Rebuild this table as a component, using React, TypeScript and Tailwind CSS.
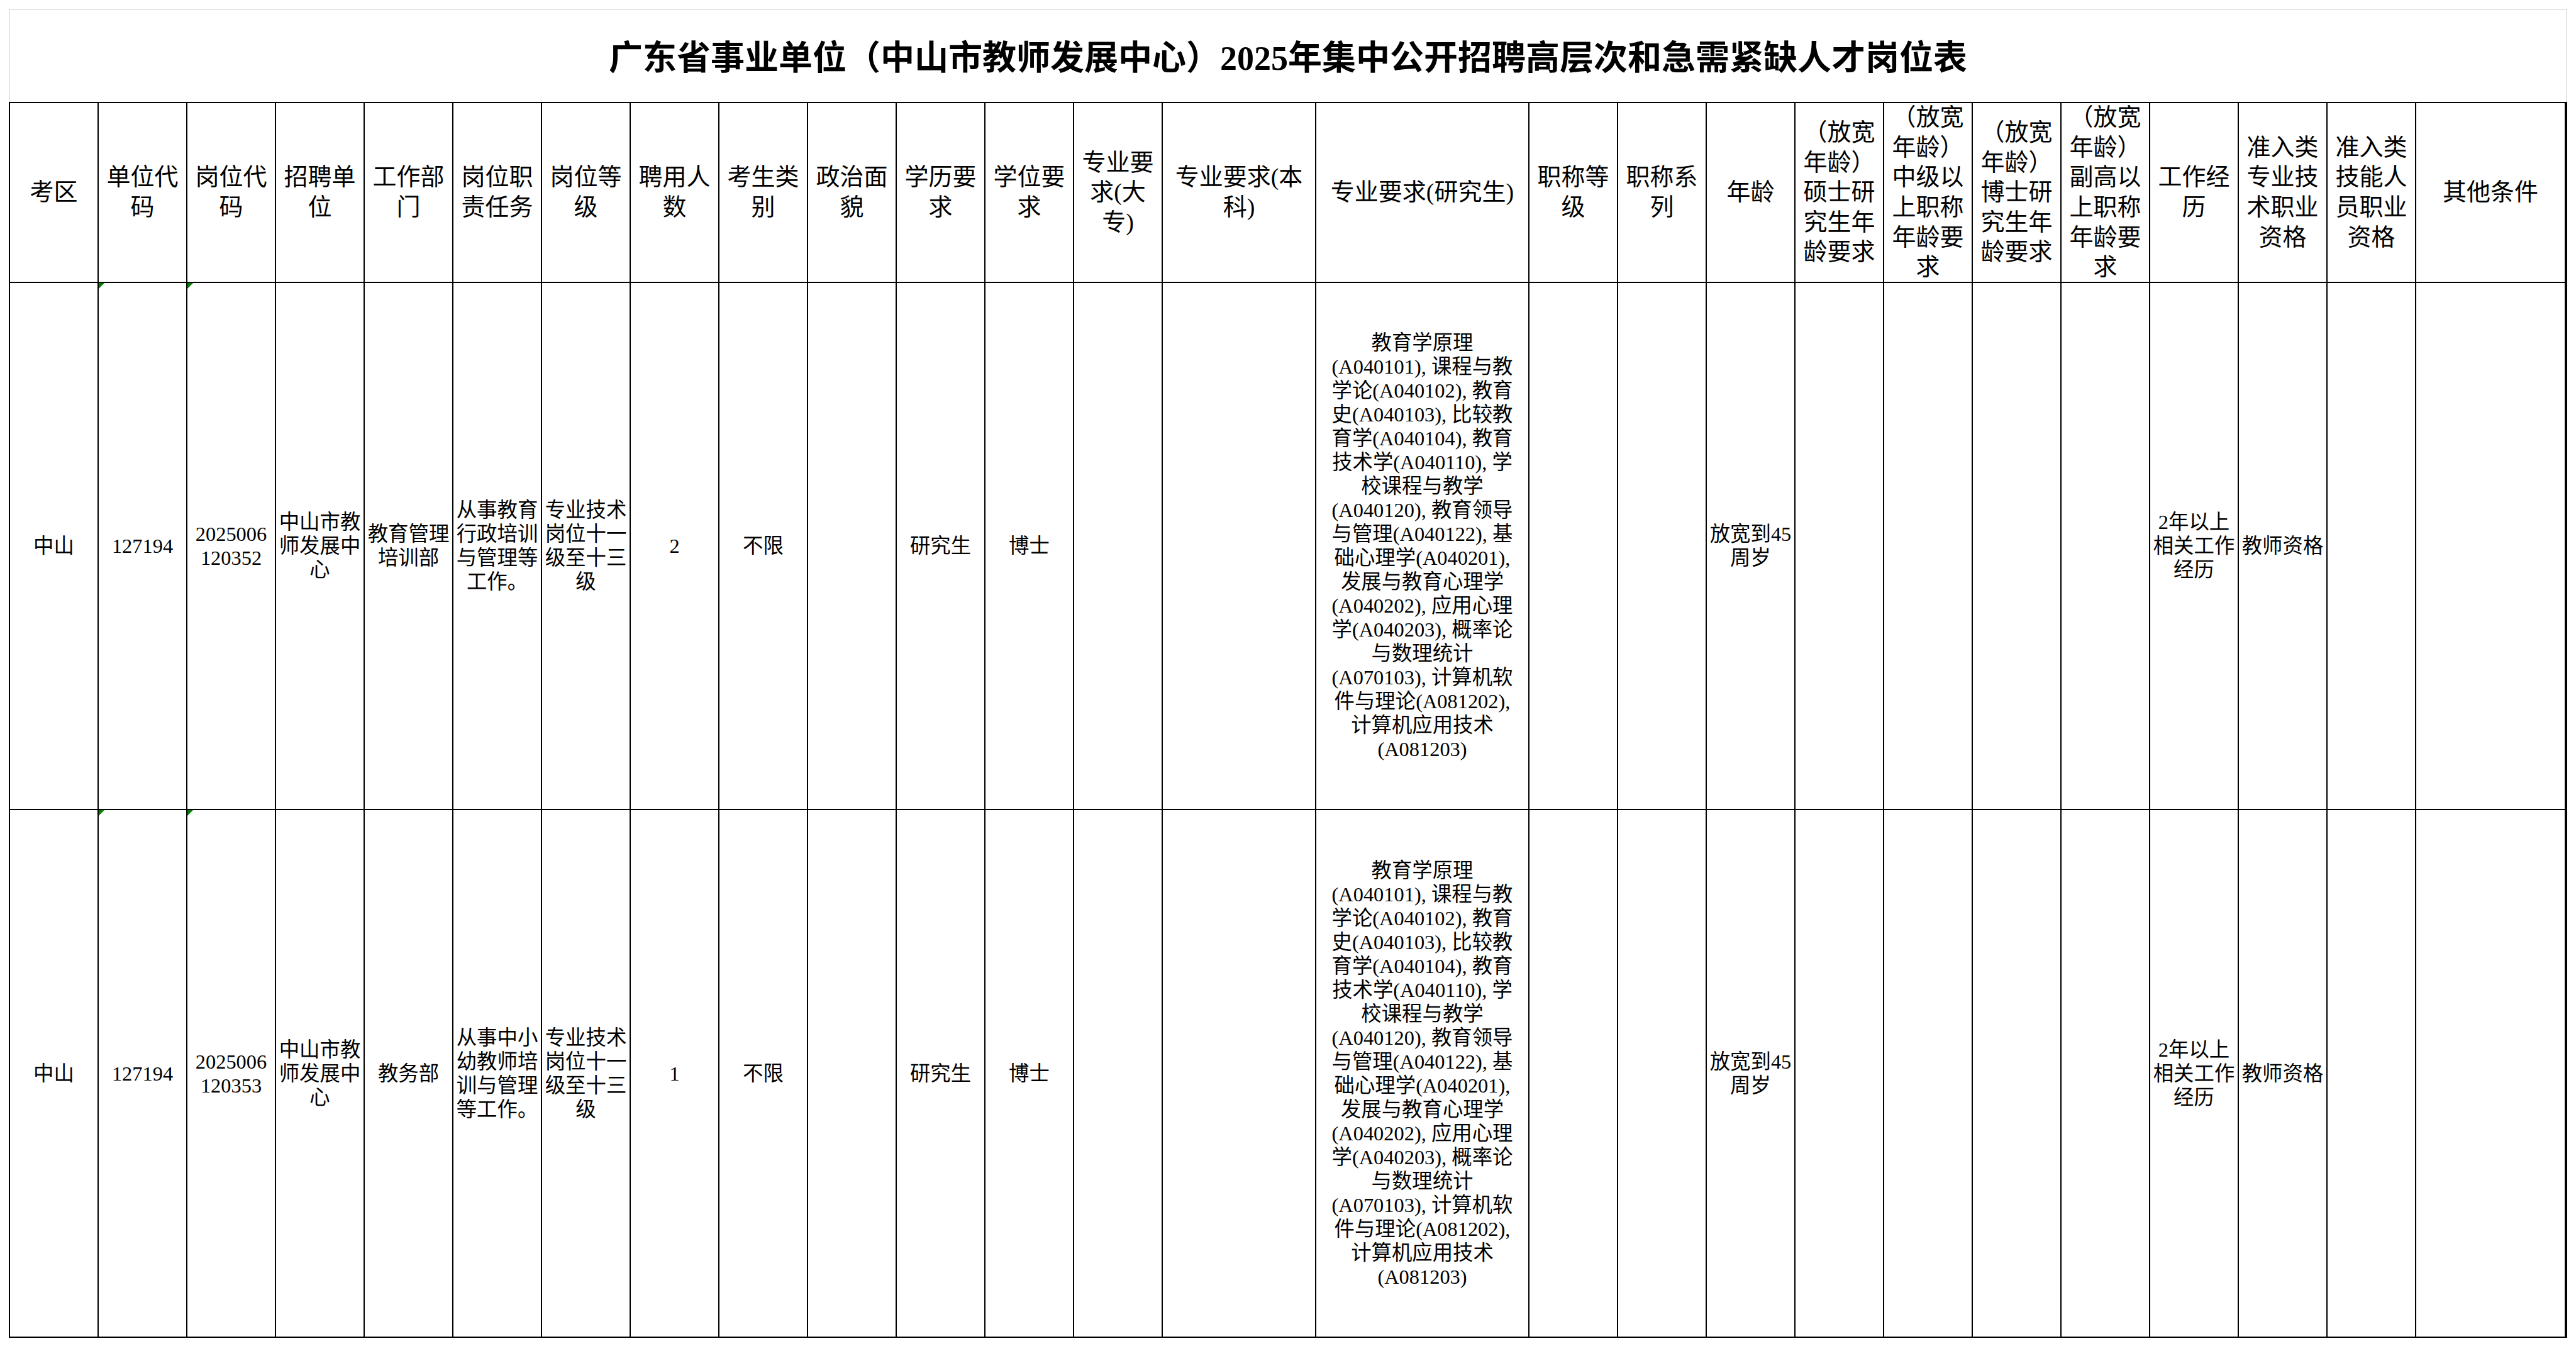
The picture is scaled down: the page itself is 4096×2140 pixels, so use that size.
import React from "react";

const HEADERS: string[][] = [
  ["考区"],
  ["单位代", "码"],
  ["岗位代", "码"],
  ["招聘单", "位"],
  ["工作部", "门"],
  ["岗位职", "责任务"],
  ["岗位等", "级"],
  ["聘用人", "数"],
  ["考生类", "别"],
  ["政治面", "貌"],
  ["学历要", "求"],
  ["学位要", "求"],
  ["专业要", "求(大", "专)"],
  ["专业要求(本", "科)"],
  ["专业要求(研究生)"],
  ["职称等", "级"],
  ["职称系", "列"],
  ["年龄"],
  ["（放宽", "年龄）", "硕士研", "究生年", "龄要求"],
  ["（放宽", "年龄）", "中级以", "上职称", "年龄要", "求"],
  ["（放宽", "年龄）", "博士研", "究生年", "龄要求"],
  ["（放宽", "年龄）", "副高以", "上职称", "年龄要", "求"],
  ["工作经", "历"],
  ["准入类", "专业技", "术职业", "资格"],
  ["准入类", "技能人", "员职业", "资格"],
  ["其他条件"],
];

const MAJOR: string[] = [
  "教育学原理",
  "(A040101), 课程与教",
  "学论(A040102), 教育",
  "史(A040103), 比较教",
  "育学(A040104), 教育",
  "技术学(A040110), 学",
  "校课程与教学",
  "(A040120), 教育领导",
  "与管理(A040122), 基",
  "础心理学(A040201),",
  "发展与教育心理学",
  "(A040202), 应用心理",
  "学(A040203), 概率论",
  "与数理统计",
  "(A070103), 计算机软",
  "件与理论(A081202),",
  "计算机应用技术",
  "(A081203)",
];

const ROWS: string[][][] = [
  [
    ["中山"],
    ["127194"],
    ["2025006", "120352"],
    ["中山市教", "师发展中", "心"],
    ["教育管理", "培训部"],
    ["从事教育", "行政培训", "与管理等", "工作。"],
    ["专业技术", "岗位十一", "级至十三", "级"],
    ["2"],
    ["不限"],
    [],
    ["研究生"],
    ["博士"],
    [],
    [],
    MAJOR,
    [],
    [],
    ["放宽到45", "周岁"],
    [],
    [],
    [],
    [],
    ["2年以上", "相关工作", "经历"],
    ["教师资格"],
    [],
    [],
  ],
  [
    ["中山"],
    ["127194"],
    ["2025006", "120353"],
    ["中山市教", "师发展中", "心"],
    ["教务部"],
    ["从事中小", "幼教师培", "训与管理", "等工作。"],
    ["专业技术", "岗位十一", "级至十三", "级"],
    ["1"],
    ["不限"],
    [],
    ["研究生"],
    ["博士"],
    [],
    [],
    MAJOR,
    [],
    [],
    ["放宽到45", "周岁"],
    [],
    [],
    [],
    [],
    ["2年以上", "相关工作", "经历"],
    ["教师资格"],
    [],
    [],
  ],
];

function Lines({ lines }: { lines: string[] }) {
  return (
    <div>
      {lines.map((l, i) => (
        <span key={i} className="block whitespace-pre">
          {l}
        </span>
      ))}
    </div>
  );
}

export default function App() {
  return (
    <div className="min-h-screen bg-white pl-[14px] pt-[14px] font-['Liberation_Serif','Noto_Sans_CJK_SC',serif] text-black">
      <div className="w-[4068px]">
        <div className="h-[148px] border-t-2 border-l-2 border-r-2 border-[#e4e4e4] flex items-center justify-center pt-[8px]">
          <h1 className="text-[54px] font-bold leading-none whitespace-nowrap">
            广东省事业单位（中山市教师发展中心）2025年集中公开招聘高层次和急需紧缺人才岗位表
          </h1>
        </div>
        <div className="grid grid-cols-[repeat(13,139px)_242px_337px_repeat(10,139px)_236px] grid-rows-[284px_836px_837px] gap-[2px] bg-black border-2 border-black">
          {HEADERS.map((h, i) => (
            <div
              key={`h${i}`}
              className="bg-white flex items-center justify-center text-center whitespace-nowrap text-[38px] leading-[47.6px]"
            >
              <Lines lines={h} />
            </div>
          ))}
          {ROWS.map((row, r) =>
            row.map((cell, c) => (
              <div
                key={`r${r}c${c}`}
                className="relative bg-white flex items-center justify-center text-center whitespace-nowrap text-[32.4px] leading-[38px]"
              >
                {(c === 1 || c === 2) && (
                  <div className="absolute top-0 left-0 w-0 h-0 border-t-[9px] border-t-[#008000] border-r-[9px] border-r-transparent" />
                )}
                {cell.length > 0 && <Lines lines={cell} />}
              </div>
            ))
          )}
        </div>
      </div>
    </div>
  );
}
